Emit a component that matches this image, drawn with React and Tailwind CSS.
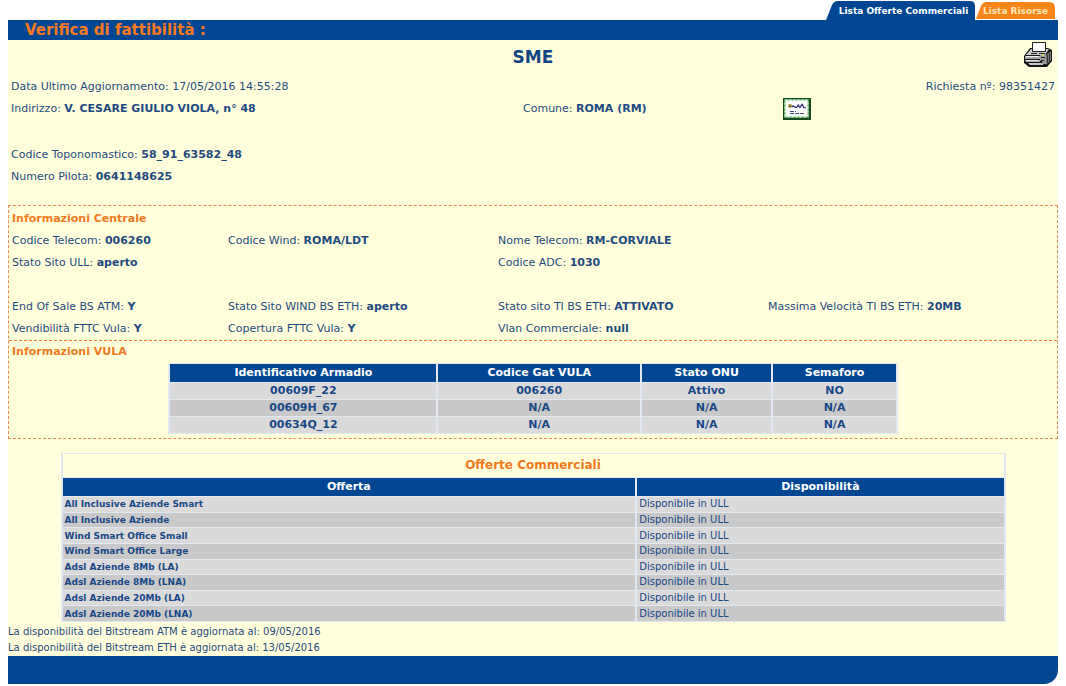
import React from "react";

const centrale = [
  ["Codice Telecom", "006260"],
  ["Codice Wind", "ROMA/LDT"],
  ["Nome Telecom", "RM-CORVIALE"],
  null,
  ["Stato Sito ULL", "aperto"],
  null,
  ["Codice ADC", "1030"],
  null,
  null,
  null,
  null,
  null,
  ["End Of Sale BS ATM", "Y"],
  ["Stato Sito WIND BS ETH", "aperto"],
  ["Stato sito TI BS ETH", "ATTIVATO"],
  ["Massima Velocità TI BS ETH", "20MB"],
  ["Vendibilità FTTC Vula", "Y"],
  ["Copertura FTTC Vula", "Y"],
  ["Vlan Commerciale", "null"],
  null,
];

const armadi = [
  ["00609F_22", "006260", "Attivo", "NO"],
  ["00609H_67", "N/A", "N/A", "N/A"],
  ["00634Q_12", "N/A", "N/A", "N/A"],
];

const offerte = [
  "All Inclusive Aziende Smart",
  "All Inclusive Aziende",
  "Wind Smart Office Small",
  "Wind Smart Office Large",
  "Adsl Aziende 8Mb (LA)",
  "Adsl Aziende 8Mb (LNA)",
  "Adsl Aziende 20Mb (LA)",
  "Adsl Aziende 20Mb (LNA)",
];

function Field({ label, value }) {
  return (
    <div className="h-[22px] leading-[22px] whitespace-nowrap">
      {label}: <b>{value}</b>
    </div>
  );
}

function Tab({ children, color, path, width, className }) {
  return (
    <a href="#" className={"relative flex h-[20px] items-center justify-center pt-[3px] text-[9px] font-bold " + className}>
      <svg className={"absolute inset-0 h-full w-full " + color} viewBox={`0 0 ${width} 20`} preserveAspectRatio="none" fill="currentColor" aria-hidden="true">
        <path d={path} />
      </svg>
      <span className="relative whitespace-nowrap">{children}</span>
    </a>
  );
}

function PrinterIcon() {
  return (
    <svg width="28" height="27" viewBox="0 0 28 27" aria-hidden="true">
      <path d="M0 14 6 6h18l4 2v11l-5 6H5l-5-4z" fill="#161616" />
      <path d="M8.500 .5h13v9h-13z" fill="#fff" stroke="#222" />
      <path d="M2 13 7 7h1v3h14V7h3l-4 6z" fill="#c8c8c8" />
      <path d="M1 14h15v3H1zM1 18h15v2H2z" fill="#a8a8a8" />
      <path d="M2 14h13v1H2zM2 18h12v1H2z" fill="#eee" />
      <path d="M4 21h16l-1 2H6z" fill="#c5c5c5" />
      <path d="m22 13 5-4v9l-5 5z" fill="#777" />
      <path d="M16 13h6v9h-4v-3h-2z" fill="#9a9a9a" />
      <path d="M15 11.500h6M17 15.500h4M17 18.500h3M7 11.500h6" stroke="#222" />
      <path d="M18 12h2v2h-2z" fill="#d9d36a" />
      <path d="M23.500 13v8M25.500 11v8" stroke="#333" />
    </svg>
  );
}

function MapIcon() {
  return (
    <svg width="28" height="22" viewBox="0 0 28 22" aria-hidden="true">
      <path d="M0 0h28v22H0z" fill="#174a1e" />
      <path d="M1 1h25v19H1z" fill="#5fa565" />
      <path d="M2.500 2.500h22v16h-22z" fill="#fff" stroke="#e0f5da" strokeWidth="2" strokeDasharray="2 2" />
      <circle cx="7" cy="8" r="2" fill="#9a8a38" />
      <path d="M9 9c2-3 3 2 5 0s1-3 2-1 1 2 2 0 1-3 2 0 1 1 3 2" fill="none" stroke="#35357e" strokeWidth="1.300" />
      <path d="M7 13.500h6M7 15.500h15" stroke="#46468c" strokeDasharray="4 1" />
    </svg>
  );
}

export default function App() {
  return (
    <div className="px-2 font-['Verdana','DejaVu_Sans',sans-serif] text-[11px] text-[#1f4a80]">
      <nav className="flex h-[20px] justify-end pr-[3px]">
        <Tab className="w-[150px] pl-[5px] text-white" width={150} color="text-[#004693]" path="M0 20 6 5Q8 1 12 1H144Q149 1 149 6V20Z">
          Lista Offerte Commerciali
        </Tab>
        <Tab className="w-[79px] text-[#ffe6b8]" width={79} color="text-[#f98518]" path="M0 19 5 6Q7 2 11 2H73Q79 2 79 8V19Z">
          Lista Risorse
        </Tab>
      </nav>
      <header className="h-[20px] bg-[#004693] pl-[17px]">
        <h1 className="text-[15px] leading-[20px] font-bold text-[#fb7a1e]">Verifica di fattibilità :</h1>
      </header>

      <main className="bg-[#ffffdc]">
        <div className="grid h-9 grid-cols-[1fr_auto_1fr] items-center">
          <h2 className="col-start-2 text-[17px] font-bold text-[#124484]">SME</h2>
          <button type="button" aria-label="Stampa" className="mr-[6px] mb-[6px] justify-self-end">
            <PrinterIcon />
          </button>
        </div>
        <section className="px-[3px] pb-[17px]">
          <div className="flex h-[22px] items-center justify-between">
            <span>Data Ultimo Aggiornamento: 17/05/2016 14:55:28</span>
            <span>Richiesta nº: 98351427</span>
          </div>
          <div className="grid h-[22px] grid-cols-[512fr_260fr_272fr] items-center">
            <Field label="Indirizzo" value="V. CESARE GIULIO VIOLA, n° 48" />
            <Field label="Comune" value="ROMA (RM)" />
            <button type="button" aria-label="Mappa" className="justify-self-start">
              <MapIcon />
            </button>
          </div>
          <div className="pt-6">
            <Field label="Codice Toponomastico" value="58_91_63582_48" />
            <Field label="Numero Pilota" value="0641148625" />
          </div>
        </section>

        <div className="border border-dashed border-[#e58a55]">
          <section className="border-b border-dashed border-[#f07a28] px-[3px] pt-[1px]">
            <h3 className="h-[23px] leading-[23px] font-bold text-[#f07a1e]">Informazioni Centrale</h3>
            <div className="grid grid-cols-[216fr_270fr_270fr_286fr]">
              {centrale.map((f, i) => (f ? <Field key={i} label={f[0]} value={f[1]} /> : <div key={i} className="h-[22px]" />))}
            </div>
          </section>
          <section className="px-[3px] pb-1">
            <h3 className="h-[22px] leading-[22px] font-bold text-[#f07a1e]">Informazioni VULA</h3>
            <table className="mx-auto w-[70%] table-fixed border-separate border-spacing-x-[2px] border-spacing-y-[1px] bg-[#e2e8f0] text-center font-bold text-[#174887]">
              <colgroup>
                <col className="w-[37%]" />
                <col className="w-[28%]" />
                <col className="w-[18%]" />
                <col className="w-[17%]" />
              </colgroup>
              <thead>
                <tr className="bg-[#004693] text-white">
                  {["Identificativo Armadio", "Codice Gat VULA", "Stato ONU", "Semaforo"].map((h) => (
                    <th key={h} className="p-0 leading-[18px]">{h}</th>
                  ))}
                </tr>
              </thead>
              <tbody>
                {armadi.map((r) => (
                  <tr key={r[0]} className="bg-[#dbdadb] even:bg-[#c9c9c9]">
                    {r.map((c, i) => (
                      <td key={i} className="p-0 leading-[16px]">{c}</td>
                    ))}
                  </tr>
                ))}
              </tbody>
            </table>
          </section>
        </div>

        <table className="mx-auto mt-[14px] h-[169px] w-[90%] table-fixed border-separate border-spacing-x-[2px] border-spacing-y-[1px] bg-[#e2e8f0] text-[#174887]">
          <colgroup>
            <col className="w-[61%]" />
            <col className="w-[39%]" />
          </colgroup>
          <thead>
            <tr className="h-[23px]">
              <th colSpan={2} className="bg-[#ffffdc] p-0 text-[12px] leading-[23px] text-[#f07a1e]">Offerte Commerciali</th>
            </tr>
            <tr className="h-[18px] bg-[#004693] text-white">
              <th className="p-0 leading-[18px]">Offerta</th>
              <th className="p-0 leading-[18px]">Disponibilità</th>
            </tr>
          </thead>
          <tbody>
            {offerte.map((o) => (
              <tr key={o} className="bg-[#dbdadb] even:bg-[#c9c9c9]">
                <td className="px-[2px] py-0 text-[9px] leading-[14px] font-bold">{o}</td>
                <td className="px-[2px] py-0 text-[10px] leading-[14px]">Disponibile in ULL</td>
              </tr>
            ))}
          </tbody>
        </table>
        <div className="pt-[2px] text-[10px] leading-[16px]">
          <p>La disponibilità del Bitstream ATM è aggiornata al: 09/05/2016</p>
          <p>La disponibilità del Bitstream ETH è aggiornata al: 13/05/2016</p>
        </div>
      </main>
      <footer className="h-7 rounded-br-[14px] bg-[#004693]" />
    </div>
  );
}
